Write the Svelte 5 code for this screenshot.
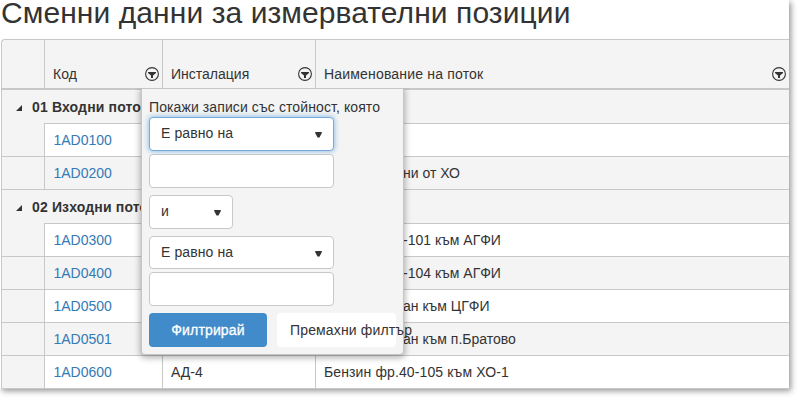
<script>
  const columns = [
    { title: 'Код', key: 'code' },
    { title: 'Инсталация', key: 'unit' },
    { title: 'Наименование на поток', key: 'name' }
  ];

  const groups = [
    {
      title: '01 Входни потоци',
      rows: [
        { code: '1AD0100', unit: 'АД-4', name: 'Нефт' },
        { code: '1AD0200', unit: 'АД-4', name: 'Некондиц', tail: 'ни от ХО' }
      ]
    },
    {
      title: '02 Изходни потоци',
      rows: [
        { code: '1AD0300', unit: 'АД-4', name: 'Газ от Е', tail: '-101 към АГФИ' },
        { code: '1AD0400', unit: 'АД-4', name: 'Газ от Е', tail: '-104 към АГФИ' },
        { code: '1AD0500', unit: 'АД-4', name: 'Проп-бут', tail: 'ан към ЦГФИ' },
        { code: '1AD0501', unit: 'АД-4', name: 'Проп-бут', tail: 'ан към п.Братово' },
        { code: '1AD0600', unit: 'АД-4', name: 'Бензин фр.40-105 към ХО-1' }
      ]
    }
  ];
</script>

{#snippet arrow()}
  <svg class="arrow" width="7" height="6" viewBox="0 0 7 6"><path d="M.2 0h6.6v1L4.5 5.6h-2L.2 1z" fill="#333" /></svg>
{/snippet}

<div class="screen">
  <main class="page">
    <h1>Сменни данни за измервателни позиции</h1>
    <div class="grid">
      <div class="row head">
        <div class="cell side"></div>
        {#each columns as column}
          <div class="cell {column.key}">
            <span>{column.title}</span>
            <svg class="filter" width="14" height="14" viewBox="0 0 14 14">
              <circle cx="7" cy="7" r="6.4" fill="none" stroke="#333" stroke-width="1.1" />
              <path d="M3 5h8v1L8 8.5V11H6V8.5L3 6z" fill="#333" />
            </svg>
          </div>
        {/each}
      </div>
      {#each groups as group}
        <div class="group">
          <svg width="6" height="6" viewBox="0 0 6 6"><path d="M6 0v6H0z" fill="#333" /></svg>
          <b>{group.title}</b>
        </div>
        {#each group.rows as row, i}
          <div class="row data" class:alt={i % 2 === 1} class:first={i === 0}>
            <div class="cell side"></div>
            <div class="cell code"><span class="link">{row.code}</span></div>
            <div class="cell unit">{row.unit}</div>
            <div class="cell name" class:wide={!row.tail}>
              {#if row.tail}<span class="lead">{row.name}</span>{row.tail}{:else}{row.name}{/if}
            </div>
          </div>
        {/each}
      {/each}
    </div>

    <form class="popup">
      <div class="hint">Покажи записи със стойност, която</div>
      <div class="select focus"><span>Е равно на</span>{@render arrow()}</div>
      <div class="box"></div>
      <div class="select logic"><span>и</span>{@render arrow()}</div>
      <div class="select second"><span>Е равно на</span>{@render arrow()}</div>
      <div class="box"></div>
      <div class="actions">
        <button type="button" class="primary">Филтрирай</button>
        <button type="button" class="clear">Премахни филтър</button>
      </div>
    </form>
  </main>
</div>

<style>
  :global(body) { background: #fff; }
  * { box-sizing: border-box; }
  .screen { height: 403px; overflow: hidden; }
  .page {
    position: relative;
    width: 789px;
    height: 389px;
    background: #fff;
    color: #333;
    font: 14px/20px "Liberation Sans", Arial, sans-serif;
    box-shadow: 2px 2px 6px rgba(0, 0, 0, .42);
    white-space: nowrap;
  }
  h1 {
    margin: 0;
    height: 39px;
    padding-left: 1px;
    font-size: 30px;
    line-height: 25px;
    font-weight: 400;
    letter-spacing: .08px;
  }
  .grid {
    margin-left: 1px;
    height: 350px;
    border: 1px solid #c8c8c8;
    border-right: 0;
    border-top-left-radius: 4px;
    background: #f4f4f4;
    overflow: hidden;
  }
  .row { display: flex; }
  .cell { flex: none; border-left: 1px solid #c8c8c8; padding: 6px 0 0 8px; overflow: hidden; }
  .side { width: 42px; border-left: 0; }
  .code { width: 118px; }
  .unit { width: 153px; }
  .name { flex: 1; }
  .wide { letter-spacing: .12px; }
  .head { height: 50px; border-bottom: 2px solid #c8c8c8; }
  .head .cell { display: flex; justify-content: space-between; align-items: flex-start; padding-top: 24px; padding-right: 3px; }
  .head .name { letter-spacing: .18px; }
  .filter { margin-top: 3px; }
  .data { height: 33px; background: #fff; }
  .data .cell { border-top: 1px solid #c8c8c8; }
  .data .side { background: #f4f4f4; }
  .data .code { padding-left: 8.5px; }
  .data.first .side { border-top: 0; }
  .alt { background: #f4f4f4; }
  .link { color: #337ab7; }
  .lead { display: inline-block; width: 79px; overflow: hidden; vertical-align: top; }
  .group { display: flex; align-items: center; height: 33px; padding: 0 0 0 14px; letter-spacing: .15px; }
  .group svg { margin: 2px 10px 0 0; }
  .data + .group { height: 34px; border-top: 1px solid #c8c8c8; }
  .popup {
    position: absolute;
    left: 141px;
    top: 88px;
    width: 263px;
    height: 267px;
    padding: 8px 7px 0;
    border: 1px solid #c5c5c5;
    border-radius: 0 0 4px 4px;
    background: #f4f4f4;
    box-shadow: 0 2px 6px 1px rgba(0, 0, 0, .3);
    clip-path: inset(0 -10px -10px -10px);
  }
  .hint { height: 20px; letter-spacing: .1px; }
  .select, .box { width: 185px; height: 34px; border: 1px solid #c8c8c8; border-radius: 4px; background: #fff; }
  .select { display: flex; justify-content: space-between; padding: 5px 11px 0 11px; letter-spacing: .1px; }
  .arrow { margin-top: 9px; }
  .focus { border-color: #76abd9; box-shadow: 0 0 5px 1px #9bc4e8; }
  .box { margin-top: 3px; }
  .logic { width: 84px; margin-top: 7px; }
  .second { height: 33px; margin-top: 7px; }
  .actions { display: flex; gap: 10px; margin-top: 7px; }
  button { height: 34px; border: 0; border-radius: 4px; font: inherit; padding: 0; white-space: nowrap; letter-spacing: .15px; }
  .primary { width: 118px; background: #428bca; color: #fff; -webkit-text-stroke: .3px #fff; }
  .clear { width: 119px; padding-left: 13px; background: #fff; color: #333; text-align: left; }
</style>
